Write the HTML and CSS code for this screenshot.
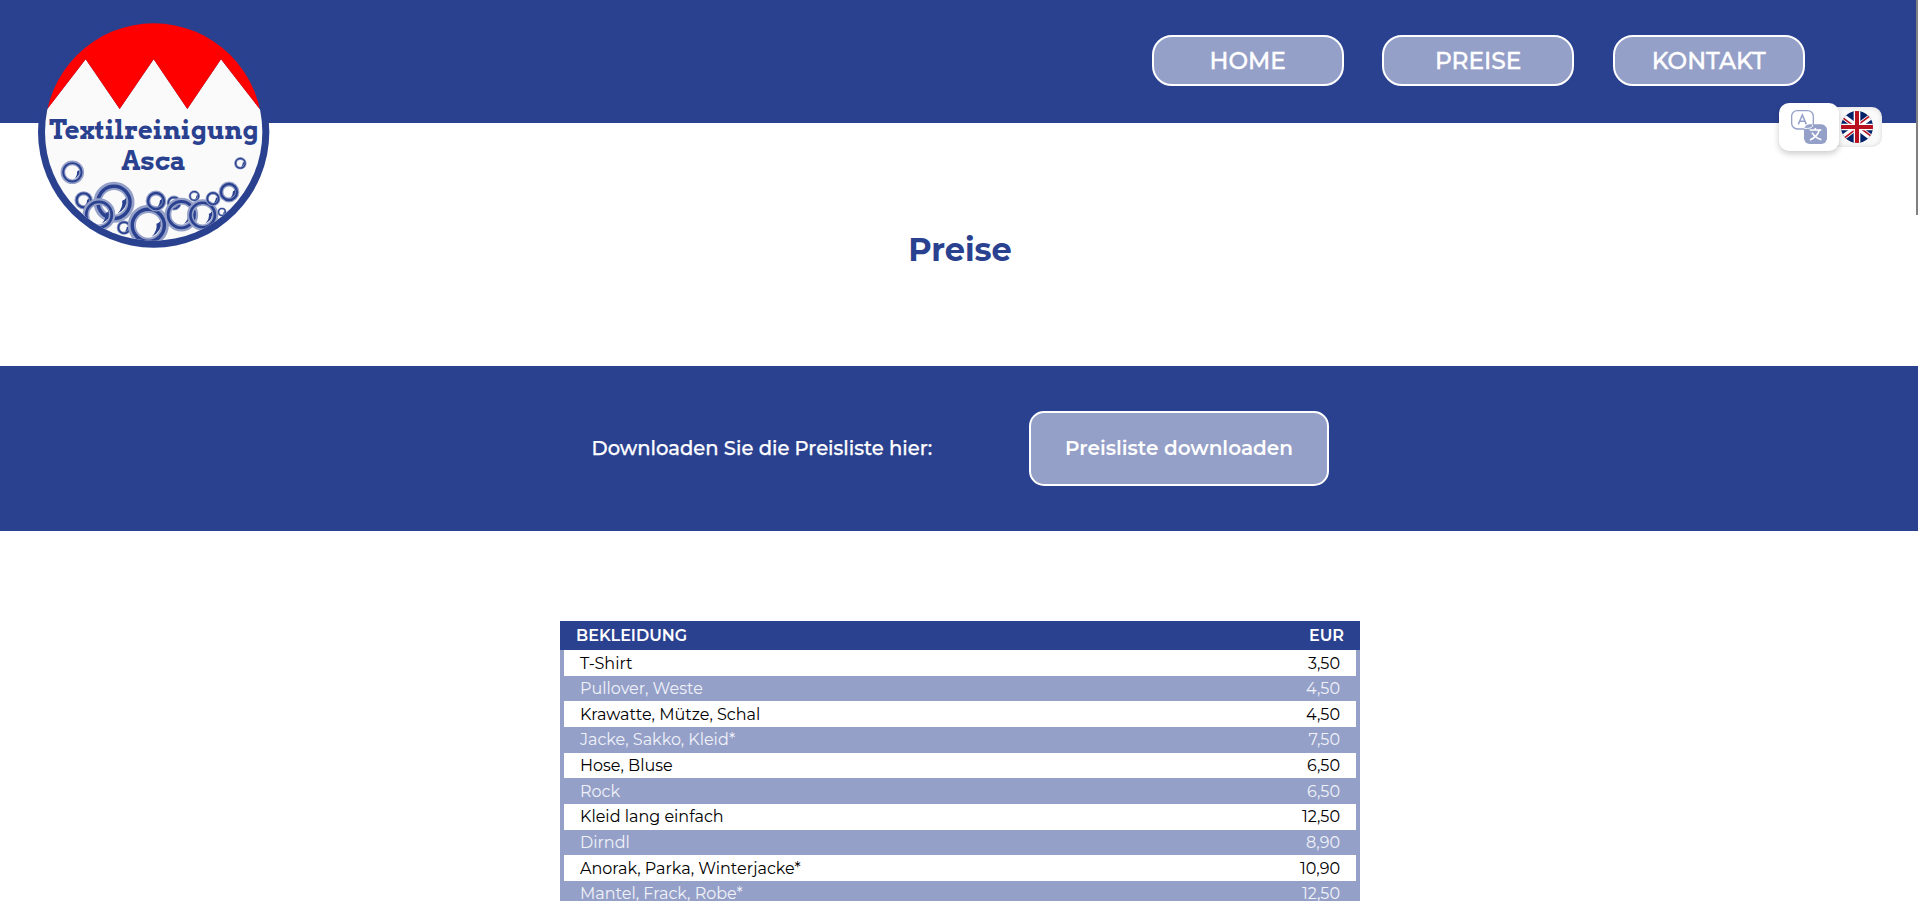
FILE: index.html
```html
<!DOCTYPE html>
<html lang="de">
<head>
<meta charset="utf-8">
<title>Preise – Textilreinigung Asca</title>
<link rel="stylesheet" href="styles.css">
</head>
<body>
<header class="header">
  <svg class="logo" viewBox="0 0 810 750" role="img" aria-label="Textilreinigung Asca">
    <defs>
      <clipPath id="disc"><circle cx="401" cy="366" r="326"/></clipPath>
      <g id="bubble">
        <circle r="40.5" fill="none" stroke="#95a0c8" stroke-width="20"/>
        <circle r="39.5" fill="none" stroke="#2a4190" stroke-width="8.5"/>
        <path d="M30 -11Q35 15 8 28Q23 13 20 -4Q26 -5 30 -11Z" fill="#2a4190"/>
      </g>
      <g id="small-bubble">
        <circle r="40" fill="none" stroke="#95a0c8" stroke-width="24"/>
        <circle r="40" fill="none" stroke="#2a4190" stroke-width="12"/>
        <path d="M30 -11Q36 19 7 30Q20 13 20 -4Q26 -5 30 -11Z" fill="#2a4190"/>
      </g>
    </defs>
    <circle cx="401" cy="366" r="347" fill="#2a4190"/>
    <path clip-path="url(#disc)" d="M60 290L82 297L197 148L299 297L401 148L502 297L603 148L719 297L750 290V750H60Z" fill="#fafafa"/>
    <path clip-path="url(#disc)" d="M60 20H750V297H719L603 148L502 297L401 148L299 297L197 148L82 297H60Z" fill="#f00"/>
    <text class="logo-text" x="88" y="386" textLength="628" lengthAdjust="spacingAndGlyphs">Textilreinigung</text>
    <text class="logo-text" x="304" y="481" textLength="195" lengthAdjust="spacingAndGlyphs">Asca</text>
    <g clip-path="url(#disc)">
      <use href="#bubble" transform="translate(157 487) scale(.7)"/>
      <use href="#small-bubble" transform="translate(191 571) scale(.53)"/>
      <use href="#bubble" transform="translate(282 577) scale(1.22)"/>
      <use href="#bubble" transform="translate(237 614) scale(.97)"/>
      <use href="#small-bubble" transform="translate(312 653) scale(.42)"/>
      <use href="#bubble" transform="translate(385 646) scale(1.22)"/>
      <use href="#small-bubble" transform="translate(408 573) scale(.6)"/>
      <use href="#small-bubble" transform="translate(462 579) scale(.43)"/>
      <use href="#bubble" transform="translate(484 614) scale(1)"/>
      <use href="#bubble" transform="translate(548 615) scale(.93)"/>
      <use href="#small-bubble" transform="translate(523 558) scale(.33)"/>
      <use href="#small-bubble" transform="translate(579 566) scale(.43)"/>
      <use href="#small-bubble" transform="translate(627 546) scale(.6)"/>
      <use href="#small-bubble" transform="translate(606 606) scale(.26)"/>
      <use href="#small-bubble" transform="translate(661 460) scale(.36)"/>
    </g>
  </svg>
  <nav class="nav">
    <a class="nav-link">HOME</a>
    <a class="nav-link">PREISE</a>
    <a class="nav-link">KONTAKT</a>
  </nav>
</header>
<div class="language">
  <div class="translate">
    <svg width="36" height="34" viewBox="0 0 108 102">
      <rect x="2" y="2" width="65" height="55" rx="17" fill="#fff" stroke="#95a0c8" stroke-width="4"/>
      <path d="M22 43L34 15L46 43M26 34H42" fill="none" stroke="#95a0c8" stroke-width="4.500"/>
      <rect x="39" y="43" width="69" height="59" rx="17" fill="#95a0c8"/>
      <path d="M40 55H50Q65 55 65 44" fill="none" stroke="#fff" stroke-width="3"/>
      <path d="M56 60H91M73 54V60M85 60Q79 80 57 90M63 68Q73 84 91 89" fill="none" stroke="#fff" stroke-width="5"/>
    </svg>
  </div>
  <div class="flag">
    <svg width="32" height="32" viewBox="0 0 96 96">
      <clipPath id="round"><circle cx="48" cy="48" r="48"/></clipPath>
      <g clip-path="url(#round)">
        <path fill="#012169" d="M0 0H96V96H0Z"/>
        <path d="M-16 0L112 96M112 0L-16 96" stroke="#fff" stroke-width="17"/>
        <path d="M-18 3L48 52M114 93L48 44M110 -3L48 44M-14 99L48 52" stroke="#b9101f" stroke-width="5"/>
        <path d="M48 0V96M0 48H96" stroke="#fff" stroke-width="20"/>
        <path d="M48 0V96M0 48H96" stroke="#b9101f" stroke-width="12"/>
      </g>
    </svg>
  </div>
</div>
<div class="scrollbar"></div>
<main>
  <h1 class="title">Preise</h1>
  <section class="download">
    <p class="download-text">Downloaden Sie die Preisliste hier:</p>
    <a class="download-button">Preisliste downloaden</a>
  </section>
  <section class="prices">
    <div class="prices-head"><span>BEKLEIDUNG</span><span>EUR</span></div>
    <ul class="prices-list">
      <li><span>T-Shirt</span><span>3,50</span></li>
      <li><span>Pullover, Weste</span><span>4,50</span></li>
      <li><span>Krawatte, Mütze, Schal</span><span>4,50</span></li>
      <li><span>Jacke, Sakko, Kleid*</span><span>7,50</span></li>
      <li><span>Hose, Bluse</span><span>6,50</span></li>
      <li><span>Rock</span><span>6,50</span></li>
      <li><span>Kleid lang einfach</span><span>12,50</span></li>
      <li><span>Dirndl</span><span>8,90</span></li>
      <li><span>Anorak, Parka, Winterjacke*</span><span>10,90</span></li>
      <li><span>Mantel, Frack, Robe*</span><span>12,50</span></li>
    </ul>
  </section>
</main>
</body>
</html>
```
FILE: styles.css
```css
* { box-sizing: border-box; }
html, body { height: 100%; overflow: hidden; }
body { margin: 0; background: #fff; color: #000; font-family: Montserrat, Inter, sans-serif; }
.header { height: 123px; background: #2a4190; display: flex; justify-content: space-between; align-items: flex-start; padding: 10px 113.3px 0 20px; }
.logo { width: 270px; height: 250px; flex: none; position: relative; }
.logo-text { font: bold 77px Arvo, "DejaVu Serif", serif; fill: #2a4190; }
.nav { display: flex; gap: 38.5px; padding-top: 25px; }
.nav-link { width: 192px; height: 51px; border: 2px solid #fff; border-radius: 20px; background: #95a0c8; color: #fff; font-size: 23.3px; font-weight: 500; -webkit-text-stroke: .4px #fff; display: flex; align-items: center; justify-content: center; }
.language { position: absolute; left: 1779px; top: 103px; display: flex; align-items: center; }
.translate { width: 60px; height: 48px; border-radius: 10px; background: #fff; box-shadow: 0 3px 6px rgba(0,0,0,.2); padding: 7px 12px; z-index: 1; }
.translate svg, .flag svg { display: block; }
.flag { width: 53px; height: 40px; margin-left: -10px; border-radius: 0 10px 10px 0; background: #fafafa; box-shadow: inset 0 0 5px rgba(0,0,0,.15); padding: 4px 9px 4px 12px; }
.scrollbar { position: absolute; right: 0; top: 0; width: 2px; height: 215px; background: #808080; }
.title { margin: 0; height: 243px; padding: 9px 0 0 2px; display: flex; align-items: center; justify-content: center; color: #2a4190; font-size: 32px; font-weight: 700; }
.download { height: 165px; background: #2a4190; display: flex; align-items: center; color: #fff; font-size: 20px; font-weight: 600; padding-left: 591.5px; }
.download-text { margin: 0; width: 437.5px; padding-bottom: 2px; font-size: 19.55px; font-weight: 500; -webkit-text-stroke: .25px #fff; white-space: nowrap; }
.download-button { width: 300px; height: 75px; border: 2px solid #fff; border-radius: 15px; background: #95a0c8; padding-bottom: 1px; display: flex; align-items: center; justify-content: center; }
.prices { width: 800px; margin: 90px 0 0 560px; font-size: 16px; }
.prices-head { height: 29.2px; background: #2a4190; color: #fff; font-weight: 600; display: flex; justify-content: space-between; align-items: center; padding: 0 16px; }
.prices-list { margin: 0; padding: 0; list-style: none; border: solid #95a0c8; border-width: 0 4px; }
.prices-list li { height: 25.65px; padding: 0 16px; display: flex; justify-content: space-between; align-items: center; }
.prices-list li:nth-child(even) { background: #95a0c8; color: #f0f2f9; }
```
